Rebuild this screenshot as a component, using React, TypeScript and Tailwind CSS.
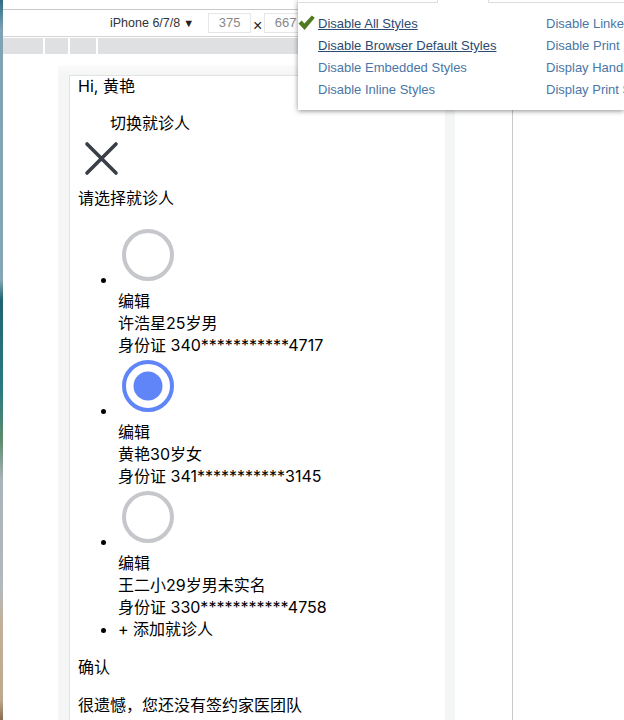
const font = "[font-family:'Liberation_Sans','Noto_Sans_CJK_SC',sans-serif]";

type Patient = {
  name: string;
  idCard: string;
  active?: boolean;
};

const PATIENTS: Patient[] = [
  { name: "许浩星25岁男", idCard: "身份证 340***********4717" },
  { name: "黄艳30岁女", idCard: "身份证 341***********3145", active: true },
  { name: "王二小29岁男未实名", idCard: "身份证 330***********4758" },
];

const LEFT_LINKS = ["Disable All Styles", "Disable Browser Default Styles", "Disable Embedded Styles", "Disable Inline Styles"];
const RIGHT_LINKS = ["Disable Linked CSS", "Disable Print Styles", "Display Handheld Styles", "Display Print Styles"];

function Radio({ active }: { active?: boolean }) {
  return (
    <svg viewBox="0 0 60 60" className="inline h-[60px] w-[60px] align-baseline">
      <circle cx="30" cy="30" r="24" fill="none" stroke={active ? "#5f85f8" : "#c6c7cb"} strokeWidth="4" />
      {active && <circle cx="30" cy="30" r="14.5" fill="#5f85f8" />}
    </svg>
  );
}

function DevTools() {
  return (
    <div className="absolute top-0 right-0 h-[110px] w-[326px] overflow-hidden bg-white shadow-[0_1px_5px_rgba(0,0,0,0.45)]">
      <div className="flex h-[3px] gap-[50px]">
        <div className="w-[140px] border-r border-b border-[#dcdcdc]" />
        <div className="flex-1 border-b border-l border-[#dcdcdc]" />
      </div>
      <div className="flex pt-[10px] pl-[20px] text-[13px] leading-[22px] text-[#4a76a6]">
        <ul className="w-[228px] shrink-0">
          {LEFT_LINKS.map((label, i) => (
            <li key={label} className={i < 2 ? "text-[#2b4a70] underline" : ""}>
              {label}
            </li>
          ))}
        </ul>
        <ul className="whitespace-nowrap">
          {RIGHT_LINKS.map((label) => (
            <li key={label}>{label}</li>
          ))}
        </ul>
      </div>
      <svg viewBox="0 0 16 14" className="absolute top-[15px] left-0 h-[15px] w-[17px]">
        <path d="M0.5 8 L3.5 5 L6 8 L13 0.5 L15.8 2.5 L6.2 14 Z" fill="#4f7a1f" />
      </svg>
    </div>
  );
}

function DeviceContent() {
  return (
    <div className="pl-[8px] [font-family:'Inter','Noto_Sans_CJK_SC',sans-serif] text-[16px] leading-[22px] text-black">
      <div className="-mt-px">Hi, 黄艳</div>
      <div className="pt-[15px] pl-[32px]">切换就诊人</div>
      <svg viewBox="0 0 40 40" className="mt-[5px] mb-[8px] ml-[2px] h-[40px] w-[40px]">
        <path d="M7 5 L36 34 M36 5 L7 34" fill="none" stroke="#3a3f47" strokeWidth="3.6" strokeLinecap="round" />
      </svg>
      <div>请选择就诊人</div>
      <ul className="my-[16px] list-disc pl-[40px]">
        {PATIENTS.map((p) => (
          <li key={p.name}>
            <Radio active={p.active} />
            <div>编辑</div>
            <div>{p.name}</div>
            <div>{p.idCard}</div>
          </li>
        ))}
        <li>+ 添加就诊人</li>
      </ul>
      <p className="mb-[16px]">确认</p>
      <p>很遗憾，您还没有签约家医团队</p>
    </div>
  );
}

export default function App() {
  return (
    <div className={`relative flex h-[720px] w-[624px] overflow-hidden bg-white ${font}`}>
      <div className="w-[3px] shrink-0 bg-[linear-gradient(to_bottom,#2f6d86_0,#7fa3b4_30px,#86a6b4_280px,#1f6470_300px,#2b7a80_390px,#5d8a6c_440px,#a9b4ba_480px,#b3b9bd_590px,#c2b09a_620px,#bda98f_700px,#8a6b50_720px)]" />
      <div className="flex min-w-0 flex-1 flex-col">
        <div className="h-[10px] shrink-0 border-b border-[#c9c9c9]" />
        <div className="flex h-[27px] shrink-0 items-center border-b border-[#d4d4d4] pl-[107px] text-[13px] text-[#333]">
          <span className="text-[12.5px]">iPhone 6/7/8</span>
          <span className="ml-[3px] w-[10px] text-[11px] leading-none text-[#222]">▼</span>
          <span className="ml-[15px] flex h-[20px] w-[43px] items-center justify-center border border-[#e6e6e6] text-[#888]">375</span>
          <span className="mt-[5px] w-[13px] text-center text-[16px] leading-none text-[#222]">×</span>
          <span className="flex h-[20px] w-[43px] items-center justify-center border border-[#e6e6e6] text-[#888]">667</span>
        </div>
        <div className="mt-[1px] flex h-[16px] shrink-0 gap-[2px]">
          <div className="w-[40px] bg-[#dfe0e2]" />
          <div className="w-[23px] bg-[#dfe0e2]" />
          <div className="w-[26px] bg-[#dfe0e2]" />
          <div className="flex-1 bg-[#dfe0e2]" />
        </div>
        <div className="flex min-h-0 flex-1 pt-[11px] pl-[55px]">
          <div className="w-[397px] shrink-0 bg-[linear-gradient(to_bottom,#fbfbfb_0,#f4f5f5_10px)] pt-[10px] pr-[10px] pl-[11px]">
            <div className="h-full border-t border-l border-[#e2e2e2] bg-white">
              <DeviceContent />
            </div>
          </div>
          <div className="ml-[57px] w-px bg-[#c9c9c9]" />
        </div>
      </div>
      <DevTools />
    </div>
  );
}
